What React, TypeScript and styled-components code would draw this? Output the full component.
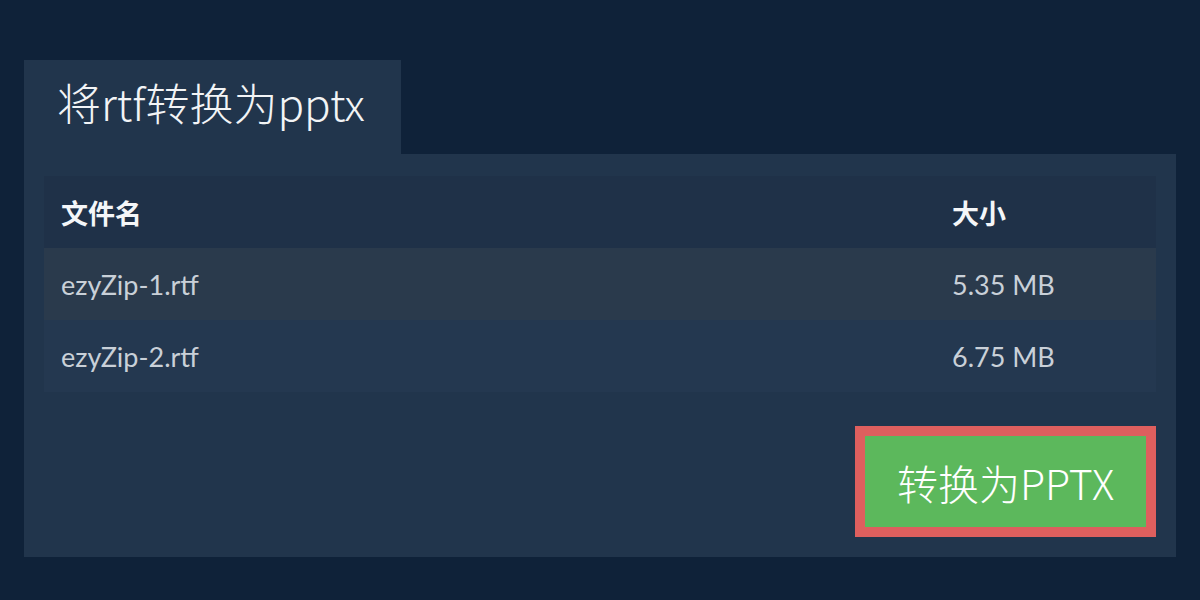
import React from "react";
import styled, { createGlobalStyle } from "styled-components";

const GlobalStyle = createGlobalStyle`
  html, body {
    margin: 0;
    padding: 0;
    background: #0f2239;
  }
  body {
    font-family: "Lato", "Noto Sans CJK SC", sans-serif;
  }
`;

const Page = styled.div`
  width: 1200px;
  height: 600px;
  box-sizing: border-box;
  padding: 60px 24px 0;
  display: flex;
  flex-direction: column;
  align-items: flex-start;
`;

const Tab = styled.div`
  width: 377px;
  height: 94px;
  box-sizing: border-box;
  padding-left: 33px;
  padding-bottom: 10px;
  display: flex;
  align-items: center;
  background: #21354c;
`;

const Title = styled.h1`
  margin: 0;
  font-family: "Noto Sans CJK SC Light", "Noto Sans CJK SC DemiLight",
    "Noto Sans CJK SC", sans-serif;
  font-size: 44px;
  font-weight: 300;
  color: #f2f4f6;
`;

const Panel = styled.div`
  align-self: stretch;
  height: 403px;
  box-sizing: border-box;
  padding: 22px 20px 20px;
  background: #21354c;
  display: flex;
  flex-direction: column;
  align-items: flex-end;
`;

const Table = styled.div`
  align-self: stretch;
  display: grid;
  grid-template-columns: 891px 1fr;
`;

const Cell = styled.div<{ $tone: "head" | "odd" | "even" }>`
  height: 72px;
  display: flex;
  align-items: center;
  padding-left: 17px;
  font-size: 27px;
  font-weight: ${(p) => (p.$tone === "head" ? 700 : 400)};
  color: ${(p) => (p.$tone === "head" ? "#f4f6f8" : "#c9d0d8")};
  background: ${(p) =>
    p.$tone === "head" ? "#1f3148" : p.$tone === "odd" ? "#2a3a4c" : "#243850"};
`;

const ConvertButton = styled.button`
  margin-top: 34px;
  width: 301px;
  height: 111px;
  box-sizing: border-box;
  border: 10px solid #de5f5e;
  background: #5cb85c;
  color: #ffffff;
  font-family: "Noto Sans CJK SC Light", "Noto Sans CJK SC DemiLight",
    "Noto Sans CJK SC", sans-serif;
  font-size: 41px;
  font-weight: 300;
  padding: 0;
  cursor: pointer;
`;

const files = [
  { name: "ezyZip-1.rtf", size: "5.35 MB" },
  { name: "ezyZip-2.rtf", size: "6.75 MB" },
];

export default function App() {
  return (
    <>
      <GlobalStyle />
      <Page>
        <Tab>
          <Title>将rtf转换为pptx</Title>
        </Tab>
        <Panel>
          <Table>
            <Cell $tone="head">文件名</Cell>
            <Cell $tone="head">大小</Cell>
            {files.map((f, i) => (
              <React.Fragment key={f.name}>
                <Cell $tone={i % 2 === 0 ? "odd" : "even"}>{f.name}</Cell>
                <Cell $tone={i % 2 === 0 ? "odd" : "even"}>{f.size}</Cell>
              </React.Fragment>
            ))}
          </Table>
          <ConvertButton>转换为PPTX</ConvertButton>
        </Panel>
      </Page>
    </>
  );
}
